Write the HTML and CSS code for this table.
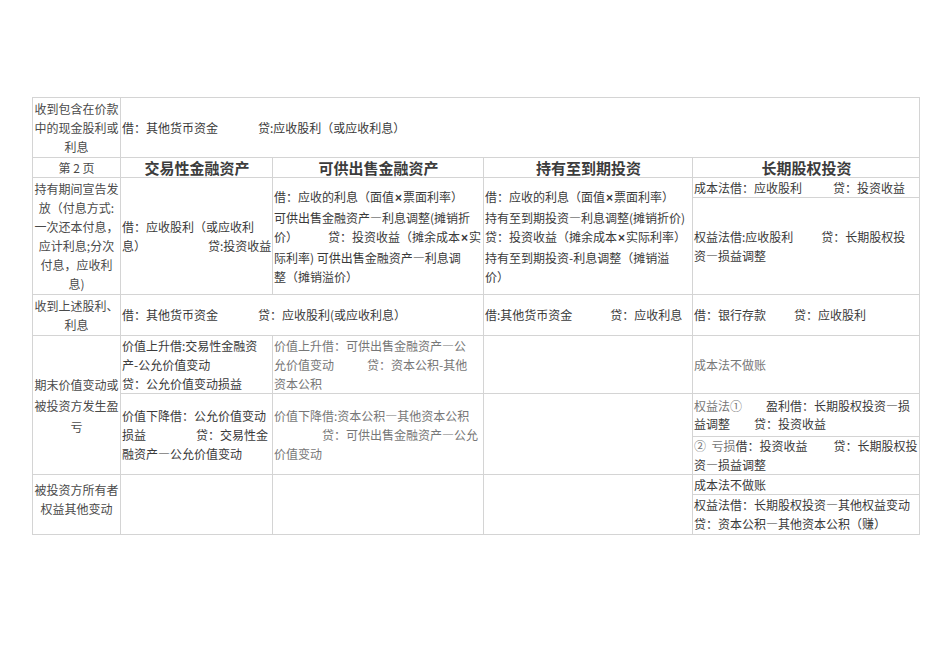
FILE: index.html
```html
<!DOCTYPE html>
<html lang="zh-CN">
<head>
<meta charset="utf-8">
<title>金融资产核算</title>
<link rel="stylesheet" href="styles.css">
</head>
<body>
<div class="page">
<table class="sheet">
<colgroup>
<col class="c1"><col class="c2"><col class="c3"><col class="c4"><col class="c5">
</colgroup>
<tr class="r1">
<td class="lab">收到包含在价款<br>中的现金股利或<br>利息</td>
<td colspan="4">借：其他货币资金<span class="g40"></span>贷:应收股利（或应收利息）</td>
</tr>
<tr class="r2">
<td class="lab pg">第 2 页</td>
<th>交易性金融资产</th>
<th>可供出售金融资产</th>
<th>持有至到期投资</th>
<th>长期股权投资</th>
</tr>
<tr class="r3a">
<td class="lab" rowspan="2">持有期间宣告发<br>放（付息方式:<br>一次还本付息，<br>应计利息;分次<br>付息，应收利<br>息)</td>
<td rowspan="2" class="txt">借：应收股利（或应收利<br>息）<span class="g62"></span>贷:投资收益</td>
<td rowspan="2" class="txt">借：应收的利息（面值<span class="x">×</span>票面利率）<br>可供出售金融资产—利息调整(摊销折<br>价）<span class="g30"></span>贷：投资收益（摊余成本<span class="x">×</span>实<br>际利率) 可供出售金融资产—利息调<br>整（摊销溢价）</td>
<td rowspan="2" class="txt">借：应收的利息（面值<span class="x">×</span>票面利率）<br>持有至到期投资—利息调整(摊销折价)<br>贷：投资收益（摊余成本<span class="x">×</span>实际利率）<br>持有至到期投资-利息调整（摊销溢<br>价）</td>
<td class="txt">成本法借：应收股利<span class="g31"></span>贷：投资收益</td>
</tr>
<tr class="r3b">
<td class="txt">权益法借:应收股利<span class="g28"></span>贷：长期股权投<br>资—损益调整</td>
</tr>
<tr class="r4">
<td class="lab">收到上述股利、<br>利息</td>
<td colspan="2">借：其他货币资金<span class="g40"></span>贷：应收股利(或应收利息）</td>
<td>借:其他货币资金<span class="g38"></span>贷：应收利息</td>
<td>借：银行存款<span class="g28"></span>贷：应收股利</td>
</tr>
<tr class="r5a">
<td class="lab tall" rowspan="3">期末价值变动或<br>被投资方发生盈<br>亏</td>
<td class="txt">价值上升借:交易性金融资<br>产-公允价值变动<br>贷：公允价值变动损益</td>
<td class="txt light">价值上升借：可供出售金融资产—公<br>允价值变动<span class="g33"></span>贷：资本公积-其他<br>资本公积</td>
<td></td>
<td class="light">成本法不做账</td>
</tr>
<tr class="r5b">
<td rowspan="2" class="txt">价值下降借：公允价值变动<br>损益<span class="g50"></span>贷：交易性金<br>融资产—公允价值变动</td>
<td rowspan="2" class="txt light">价值下降借:资本公积—其他资本公积<br><span class="g48"></span>贷：可供出售金融资产—公允<br>价值变动</td>
<td rowspan="2"></td>
<td class="sub"><span class="light">权益法①</span><span class="g24"></span>盈利借：长期股权投资—损<br>益调整<span class="g24"></span>贷：投资收益</td>
</tr>
<tr class="r5c">
<td class="sub"><span class="light">②&nbsp;&nbsp;亏损</span>借：投资收益<span class="g26"></span>贷：长期股权投<br>资—损益调整</td>
</tr>
<tr class="r6a">
<td class="lab top" rowspan="2">被投资方所有者<br>权益其他变动</td>
<td rowspan="2"></td>
<td rowspan="2"></td>
<td rowspan="2"></td>
<td>成本法不做账</td>
</tr>
<tr class="r6b">
<td class="sub">权益法借：长期股权投资—其他权益变动<br>贷：资本公积—其他资本公积（赚）</td>
</tr>
</table>
</div>
</body>
</html>
```
FILE: styles.css
```css
html, body {
  margin: 0;
  padding: 0;
  background: #ffffff;
}
.page {
  padding: 97px 0 0 32px;
}
.sheet {
  border-collapse: collapse;
  table-layout: fixed;
  width: 887px;
  font-family: "Noto Sans CJK SC", "Noto Sans", sans-serif;
  font-size: 12px;
  color: #3a3a3a;
}
.c1 { width: 88px; }
.c2 { width: 152px; }
.c3 { width: 211px; }
.c4 { width: 209px; }
.c5 { width: 227px; }
.sheet td, .sheet th {
  border: 1px solid #d4d4d4;
  padding: 0 0 0 1px;
  vertical-align: middle;
  white-space: nowrap;
  overflow: visible;
  line-height: 18px;
  text-align: left;
}
.sheet td.lab {
  text-align: center;
  padding: 0;
  line-height: 19px;
  color: #4a4a4a;
}
.sheet td.pg { line-height: 16px; }
.sheet td.tall { line-height: 21px; }
.sheet td.top {
  vertical-align: top;
  padding-top: 5px;
  line-height: 19px;
}
.sheet td.txt { line-height: 19px; }
.sheet td.sub { line-height: 18.5px; }
.sheet th {
  text-align: center;
  font-size: 15px;
  font-weight: bold;
  color: #3c3c3c;
  line-height: 16px;
}
.x {
  font-family: "Liberation Sans", sans-serif;
  font-weight: bold;
  margin: 0 1px;
}
.light { color: #777777; }
.r1 td { height: 59px; }
.r2 td, .r2 th { height: 19px; }
.r3a td { height: 19px; }
.r3b td { height: 96px; }
.r4 td { height: 40px; }
.r5a td { height: 57px; }
.r5b td { height: 42px; }
.r5c td { height: 37px; }
.r6a td { height: 19px; }
.r6b td { height: 39px; }
.g24, .g26, .g28, .g30, .g31, .g33, .g38, .g40, .g48, .g50, .g62 {
  display: inline-block;
}
.g24 { width: 24px; }
.g26 { width: 26px; }
.g28 { width: 28px; }
.g30 { width: 30px; }
.g31 { width: 31px; }
.g33 { width: 33px; }
.g38 { width: 38px; }
.g40 { width: 40px; }
.g48 { width: 48px; }
.g50 { width: 50px; }
.g62 { width: 62px; }
```
